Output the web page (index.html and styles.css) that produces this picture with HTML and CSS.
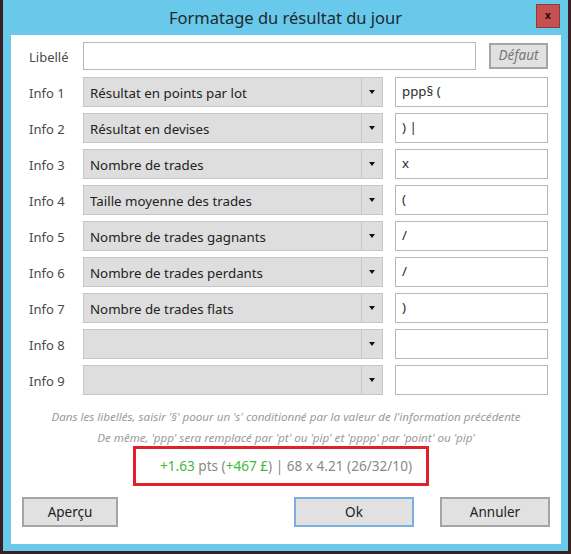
FILE: index.html
```html
<!DOCTYPE html>
<html lang="fr">
<head>
    <meta charset="UTF-8">
    <title>Formatage du résultat du jour</title>
    <link rel="stylesheet" href="styles.css">
</head>
<body>
    <div class="window">
        <div class="titlebar">
            <div class="title">Formatage du résultat du jour</div>
            <div class="close">x</div>
        </div>

        <div class="client">
            <div class="form">
                <div class="row row-libelle">
                    <div class="label">Libellé</div>
                    <div class="field field-wide"></div>
                    <div class="btn btn-default">Défaut</div>
                </div>

                <div class="row">
                    <div class="label">Info 1</div>
                    <div class="combo"><div class="combo-value">Résultat en points par lot</div><div class="combo-arrow"></div></div>
                    <div class="field">ppp§ (</div>
                </div>
                <div class="row">
                    <div class="label">Info 2</div>
                    <div class="combo"><div class="combo-value">Résultat en devises</div><div class="combo-arrow"></div></div>
                    <div class="field">) |</div>
                </div>
                <div class="row">
                    <div class="label">Info 3</div>
                    <div class="combo"><div class="combo-value">Nombre de trades</div><div class="combo-arrow"></div></div>
                    <div class="field">x</div>
                </div>
                <div class="row">
                    <div class="label">Info 4</div>
                    <div class="combo"><div class="combo-value">Taille moyenne des trades</div><div class="combo-arrow"></div></div>
                    <div class="field">(</div>
                </div>
                <div class="row">
                    <div class="label">Info 5</div>
                    <div class="combo"><div class="combo-value">Nombre de trades gagnants</div><div class="combo-arrow"></div></div>
                    <div class="field">/</div>
                </div>
                <div class="row">
                    <div class="label">Info 6</div>
                    <div class="combo"><div class="combo-value">Nombre de trades perdants</div><div class="combo-arrow"></div></div>
                    <div class="field">/</div>
                </div>
                <div class="row">
                    <div class="label">Info 7</div>
                    <div class="combo"><div class="combo-value">Nombre de trades flats</div><div class="combo-arrow"></div></div>
                    <div class="field">)</div>
                </div>
                <div class="row">
                    <div class="label">Info 8</div>
                    <div class="combo"><div class="combo-value"></div><div class="combo-arrow"></div></div>
                    <div class="field"></div>
                </div>
                <div class="row">
                    <div class="label">Info 9</div>
                    <div class="combo"><div class="combo-value"></div><div class="combo-arrow"></div></div>
                    <div class="field"></div>
                </div>
            </div>

            <div class="hints">
                <p>Dans les libellés, saisir '§' poour un 's' conditionné par la valeur de l'information précédente</p>
                <p>De même, 'ppp' sera remplacé par 'pt' ou 'pip' et 'pppp' par 'point' ou 'pip'</p>
            </div>

            <div class="preview">
                <span class="gain">+1.63</span> pts (<span class="gain">+467 £</span>) | 68 x 4.21 (26/32/10)
            </div>

            <div class="actions">
                <div class="btn btn-apercu">Aperçu</div>
                <div class="btn btn-ok">Ok</div>
                <div class="btn btn-annuler">Annuler</div>
            </div>
        </div>
    </div>
</body>
</html>
```

FILE: styles.css
```css
:root {
    --frame: #68c9ea;
    --text: #222222;
    --label: #4a4a4a;
    --hint: #9a9a9a;
    --combo-bg: #dedede;
    --combo-border: #c6c6c6;
    --field-border: #b8b8b8;
    --btn-bg: #e1e1e1;
    --btn-border: #a5a5a5;
    --green: #3fb83f;
}

* {
    margin: 0;
    padding: 0;
    box-sizing: border-box;
}

body {
    background: #3a1f22;
    font-family: 'Noto Sans', sans-serif;
    color: var(--text);
    width: 571px;
    height: 554px;
    overflow: hidden;
}

.window {
    margin-left: 3px;
    width: 565px;
    height: 551px;
    background: var(--frame);
    padding: 0 7px 7px 8px;
    display: flex;
    flex-direction: column;
}

/* Title bar */
.titlebar {
    height: 35px;
    display: grid;
    grid-template-columns: 1fr auto 1fr;
    align-items: center;
    margin: 0 -7px 0 -8px;
}

.title {
    grid-column: 2;
    font-size: 16.5px;
    color: #1e2a30;
    padding-bottom: 1px;
}

.close {
    grid-column: 3;
    justify-self: end;
    align-self: start;
    margin: 4px 8px 0 0;
    width: 24px;
    height: 24px;
    background: #c75050;
    border: 1px solid #8c3a3a;
    color: #111;
    font-size: 10px;
    font-weight: bold;
    line-height: 20px;
    text-align: center;
}

/* Client area */
.client {
    flex: 1;
    background: white;
    display: flex;
    flex-direction: column;
    padding-top: 7px;
}

.form {
    display: flex;
    flex-direction: column;
    gap: 6px;
    padding: 0 13px 0 18px;
}

.row {
    display: flex;
    align-items: center;
    height: 30px;
}

.row-libelle {
    height: 28px;
    margin-bottom: 1px;
}

.label {
    width: 54px;
    font-size: 13px;
    color: var(--label);
    padding-top: 1px;
}

.combo {
    width: 300px;
    height: 30px;
    display: flex;
    background: var(--combo-bg);
    border: 1px solid var(--combo-border);
}

.combo-value {
    flex: 1;
    padding-left: 6px;
    font-size: 13.3px;
    line-height: 30px;
}

.combo-arrow {
    width: 21px;
    border-left: 1px solid var(--combo-border);
    display: flex;
    align-items: center;
    justify-content: center;
}

.combo-arrow::after {
    content: "";
    border-left: 3.5px solid transparent;
    border-right: 3.5px solid transparent;
    border-top: 4px solid #111;
}

.field {
    width: 153px;
    height: 30px;
    margin-left: 12px;
    border: 1px solid var(--field-border);
    background: white;
    padding-left: 6px;
    font-size: 13.3px;
    line-height: 27px;
    color: #2b2b2b;
}

.field-wide {
    width: 393px;
    height: 28px;
    margin-left: 0;
}

.btn {
    background: var(--btn-bg);
    border: 2px solid var(--btn-border);
    text-align: center;
    font-size: 13.5px;
    color: var(--text);
}

.btn-default {
    width: 59px;
    height: 26px;
    margin-left: 13px;
    font-style: italic;
    color: #777;
    line-height: 21px;
}

/* Hints and preview */
.hints {
    margin-top: 11px;
    text-align: center;
    font-size: 11.6px;
    font-style: italic;
    color: var(--hint);
    line-height: 21px;
}

.preview {
    align-self: flex-start;
    margin-left: 122px;
    margin-top: -2px;
    width: 296px;
    height: 40px;
    border: 3px solid #e0202a;
    padding-left: 10px;
    text-align: center;
    font-size: 13.6px;
    line-height: 33px;
    color: #8a8a8a;
}

.gain {
    color: var(--green);
}

/* Buttons */
.actions {
    display: flex;
    padding: 0 11px;
    margin-top: 11px;
}

.actions .btn {
    height: 30px;
    line-height: 26px;
}

.btn-apercu {
    width: 96px;
}

.btn-ok {
    width: 120px;
    margin-left: auto;
    border-color: #7ab0e0;
}

.btn-annuler {
    width: 110px;
    margin-left: 26px;
}
```
